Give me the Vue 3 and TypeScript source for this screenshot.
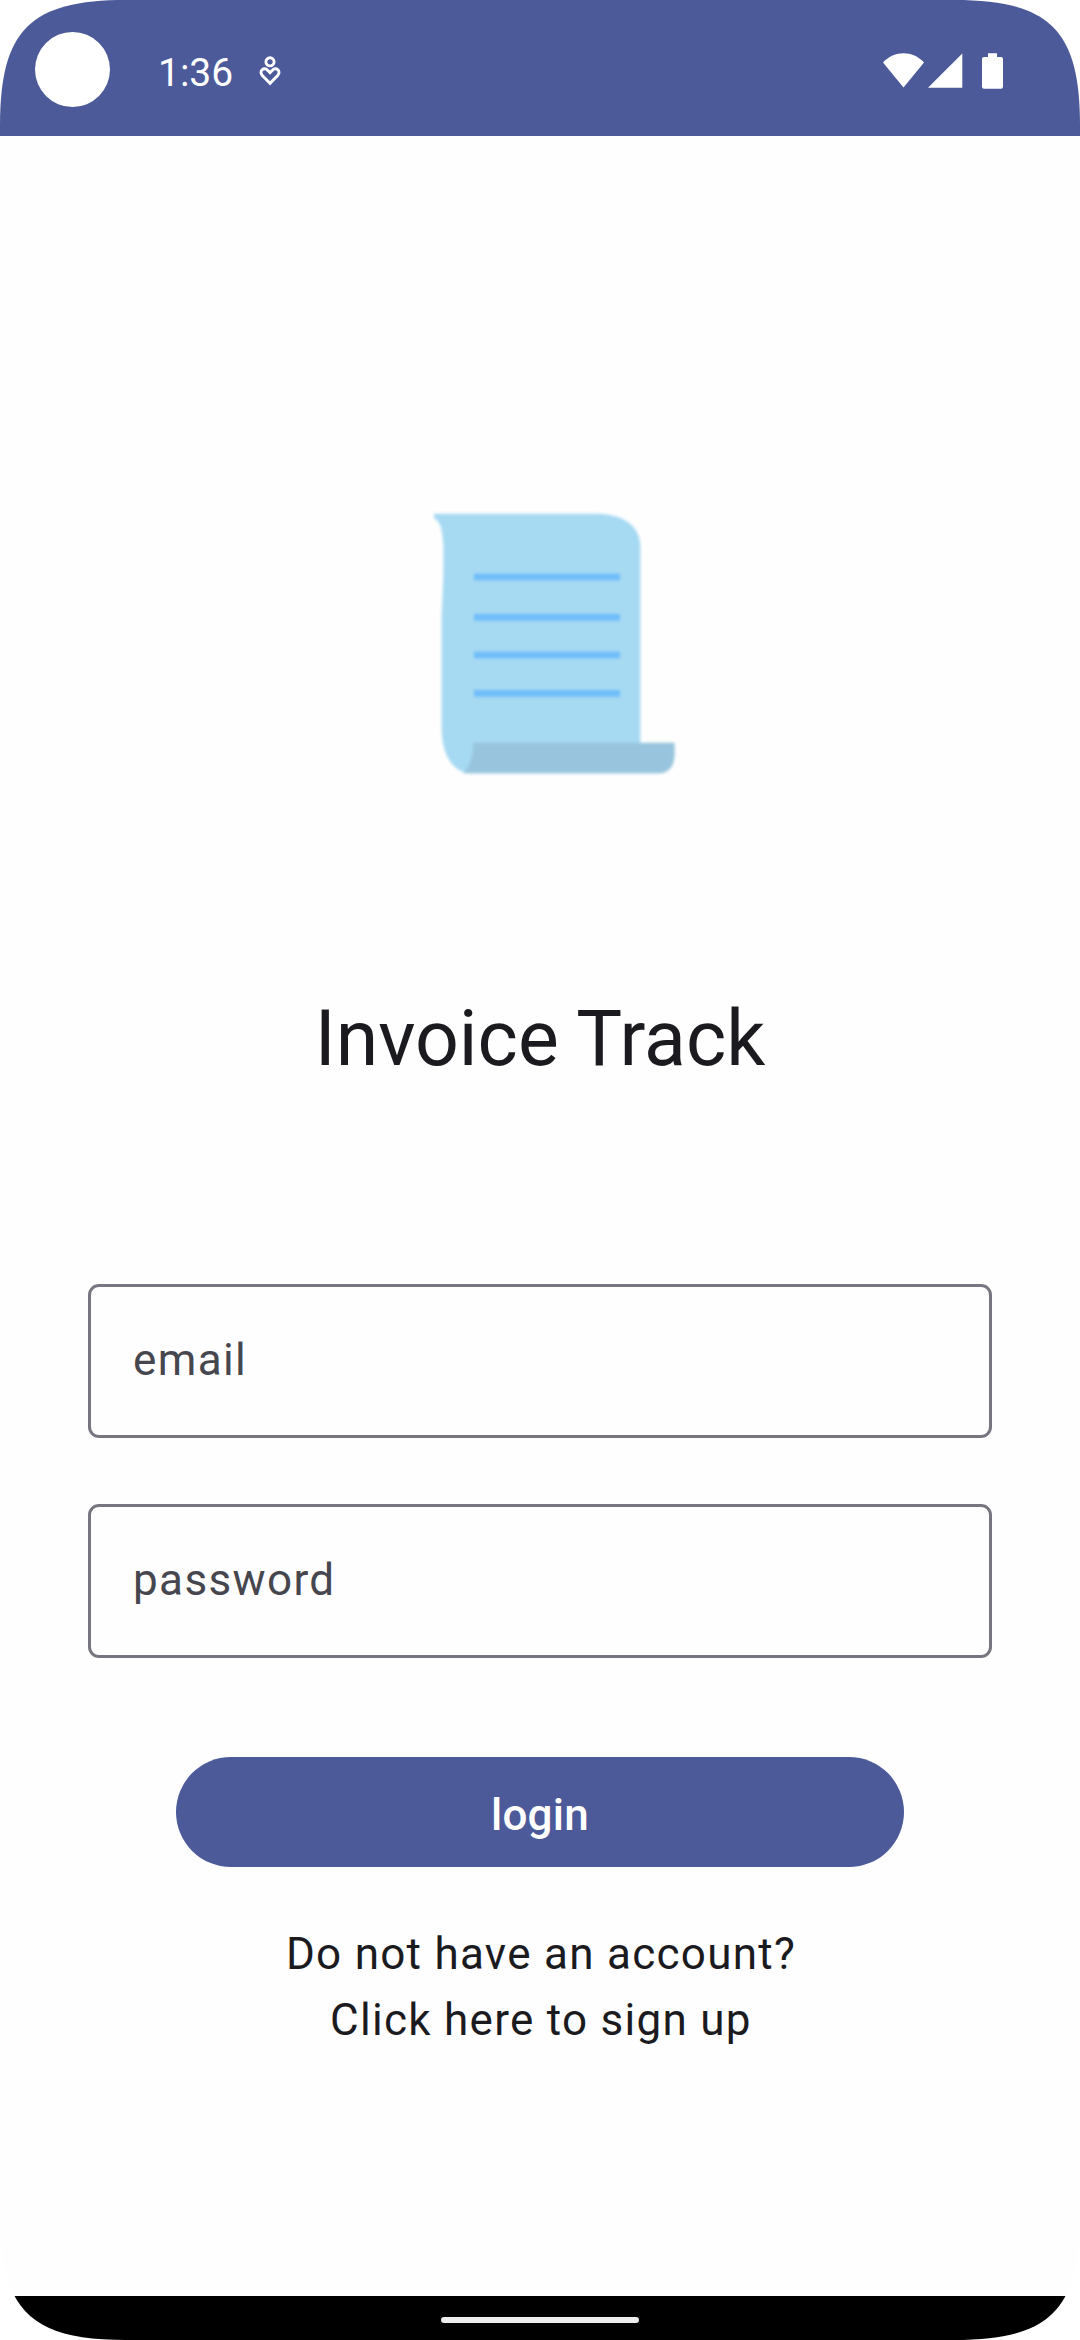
<script setup lang="ts">
interface Field {
  id: string
  label: string
}

const time = '1:36'
const fields: Field[] = [
  { id: 'email', label: 'email' },
  { id: 'password', label: 'password' },
]
const signupLines: string[] = ['Do not have an account?', 'Click here to sign up']
const ruleLines: number[] = [291, 412, 525, 640]
</script>

<template>
  <div class="screen">
    <header class="status">
      <span class="camera"></span>
      <span class="time">{{ time }}</span>
      <svg class="care" width="24" height="32" viewBox="0 0 24 32" fill="none" stroke="#fff">
        <circle cx="12" cy="6.8" r="4.1" stroke-width="2.9" />
        <path d="M12 28.3 L4.3 20.4 C0.4 16.2 6 11.4 9.6 15.2 L12 17.6 L14.4 15.2 C18 11.4 23.6 16.2 19.7 20.4 Z" stroke-width="2.9" />
      </svg>
      <div class="system">
        <svg width="41" height="36" viewBox="0 0 41 36" fill="#fff">
          <path d="M20.5 34.5 L0 9.4 C11.5 -2.9 29.5 -2.9 41 9.4 Z" />
        </svg>
        <svg class="signal" width="35" height="36" viewBox="0 0 35 36" fill="#fff">
          <path d="M34.3 0.5 V34.7 H0 Z" />
        </svg>
        <svg class="battery" width="21" height="36" viewBox="0 0 21 36" fill="#fff">
          <path d="M6 0.3 H15 V4 H19 Q21 4 21 6 V33.7 Q21 35.7 19 35.7 H2 Q0 35.7 0 33.7 V6 Q0 4 2 4 H6 Z" />
        </svg>
      </div>
    </header>

    <main class="content">
      <svg class="logo" width="320" height="320" viewBox="0 0 960 960">
        <path
          d="M102 101 L595 101 C675 104 721 140 721 200 L721 800 L790 880 L205 880 C155 872 125 820 125 745 L125 400 C130 320 131 260 130 190 C126 140 121 128 102 114 Z"
          fill="#a6d9f2"
        />
        <path d="M220 788 H824 V820 C824 858 808 880 775 880 H190 C208 860 220 830 220 788 Z" fill="#98c5dd" />
        <line v-for="y in ruleLines" :key="y" x1="222" x2="660" :y1="y" :y2="y" stroke="#6fbdfb" stroke-width="20" />
      </svg>
      <h1 class="title">Invoice Track</h1>

      <form class="form" @submit.prevent>
        <div v-for="field in fields" :key="field.id" class="field">
          <span>{{ field.label }}</span>
        </div>
        <button class="login" type="submit"><span>login</span></button>
      </form>

      <div class="signup">
        <span v-for="line in signupLines" :key="line">{{ line }}</span>
      </div>
    </main>

    <footer class="nav"><span class="handle"></span></footer>
  </div>
</template>

<style>
body {
  margin: 0;
  background: #fff;
}
</style>

<style scoped>
.screen {
  width: 1080px;
  height: 2340px;
  display: flex;
  flex-direction: column;
  overflow: hidden;
  background: #fefefe;
  color: #1b1b1f;
  font-family: Roboto, "Noto Sans", sans-serif;
  clip-path: path('M0 126 C0 30 30 0 126 0 H954 C1050 0 1080 30 1080 126 V2214 C1080 2310 1050 2340 954 2340 H126 C30 2340 0 2310 0 2214 Z');
}

.status {
  height: 136px;
  flex: none;
  box-sizing: border-box;
  display: flex;
  align-items: flex-start;
  padding: 32px 77px 0 35px;
  background: #4c5a99;
}

.camera {
  width: 75px;
  height: 75px;
  border-radius: 50%;
  background: #fff;
}

.time {
  margin: 18px 0 0 48px;
  font-size: 39px;
  line-height: 46px;
  color: #fff;
}

.care {
  margin: 23px 0 0 25px;
}

.system {
  margin: 21px 0 0 auto;
  display: flex;
}

.signal {
  margin-left: 3.7px;
}

.battery {
  margin-left: 19.3px;
}

.content {
  flex: 1;
  display: flex;
  flex-direction: column;
  align-items: center;
}

.logo {
  margin: 344px 0 0 40px;
  filter: blur(1.4px);
}

.title {
  margin: 190px 0 0;
  font-size: 77px;
  font-weight: 400;
  line-height: 99px;
}

.form {
  width: 904px;
  margin-top: 195px;
  display: flex;
  flex-direction: column;
  align-items: center;
}

.field {
  width: 100%;
  height: 154px;
  box-sizing: border-box;
  margin-bottom: 66px;
  padding: 40px 42px 0;
  border: 3px solid #767680;
  border-radius: 11px;
  font-size: 44px;
  line-height: 66px;
  letter-spacing: 1.375px;
  color: #46464f;
}

.login {
  width: 728px;
  height: 110px;
  margin-top: 33px;
  padding: 6px 0 0;
  border: 0;
  border-radius: 55px;
  background: #4c5a99;
  color: #fff;
  font: 500 44px/66px Roboto, "Noto Sans", sans-serif;
  letter-spacing: 0.275px;
}

.signup {
  margin-top: 54px;
  padding-left: 2px;
  display: flex;
  flex-direction: column;
  align-items: center;
  font-size: 44px;
  line-height: 66px;
  letter-spacing: 1.28px;
}

.nav {
  height: 44px;
  flex: none;
  display: flex;
  justify-content: center;
  align-items: flex-start;
  background: #000;
}

.handle {
  width: 198px;
  height: 6px;
  margin-top: 21px;
  border-radius: 3px;
  background: #ececec;
}
</style>
